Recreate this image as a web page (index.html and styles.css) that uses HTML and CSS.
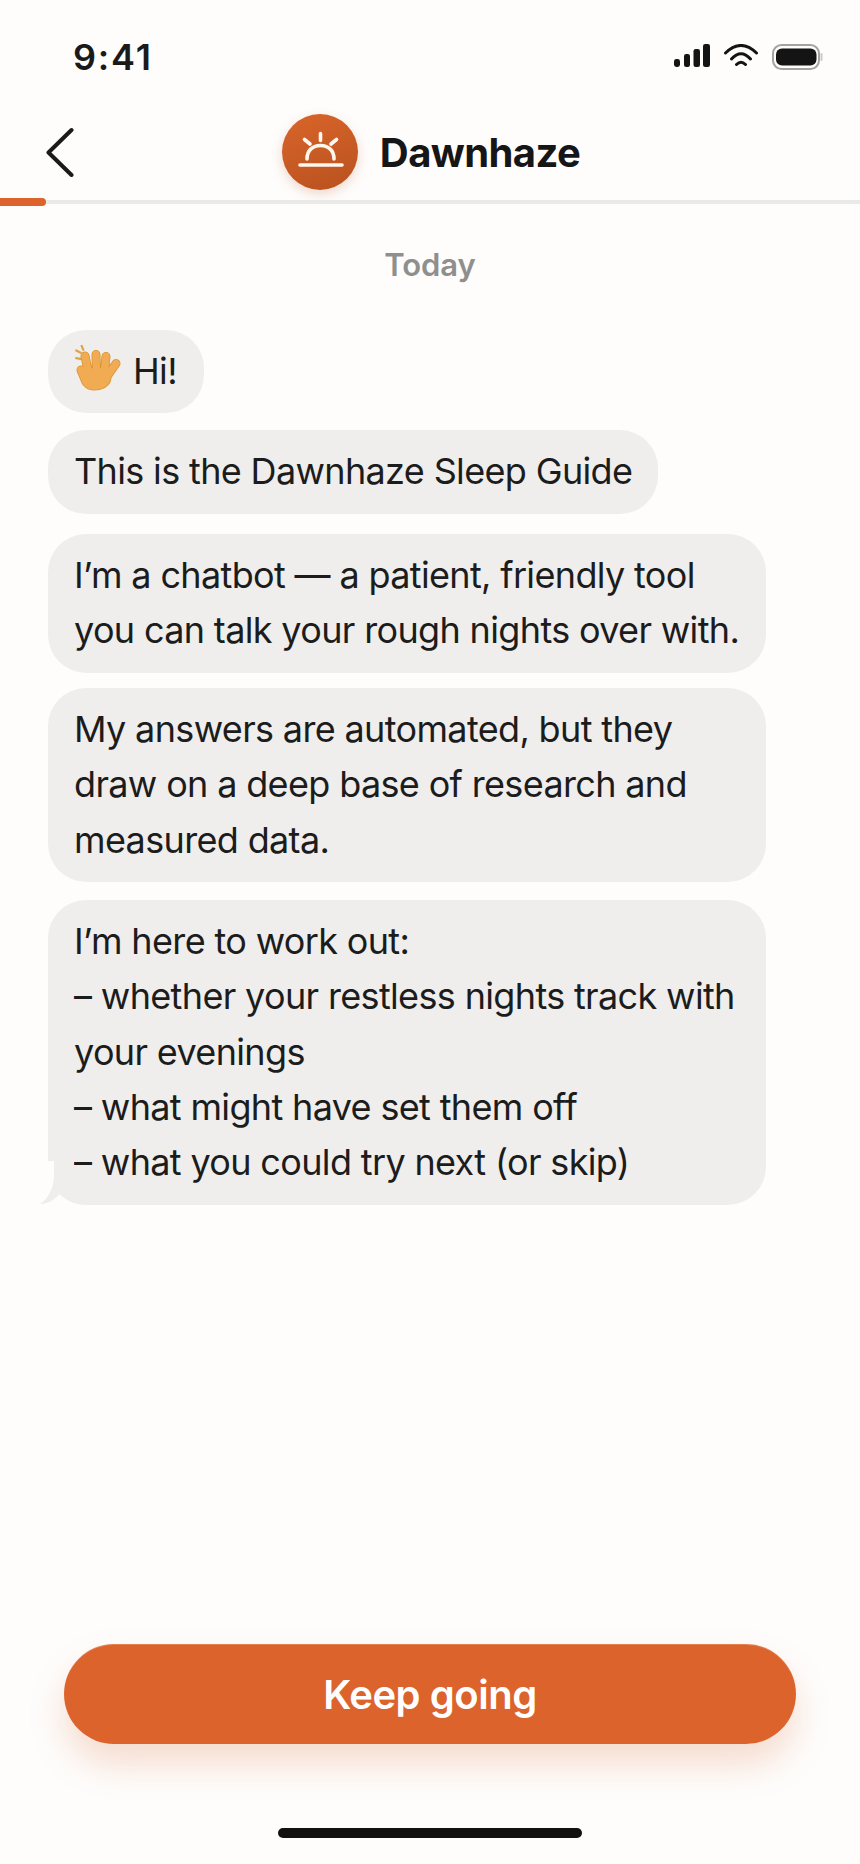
FILE: index.html
```html
<!DOCTYPE html>
<html lang="en">
<head>
<meta charset="utf-8">
<title>Dawnhaze</title>
<link rel="stylesheet" href="styles.css">
</head>
<body>
<div class="phone">
  <div class="status">
    <span class="time">9:41</span>
    <div class="status-icons">
      <svg class="ic-signal" width="36" height="24" viewBox="0 0 36 24"><rect x="0" y="15" width="6" height="8" rx="2.4"/><rect x="10" y="10" width="6" height="13" rx="2.2"/><rect x="19.5" y="5" width="6.5" height="18" rx="2.2"/><rect x="29" y="0" width="7" height="23" rx="2.2"/></svg>
      <svg class="ic-wifi" width="34" height="24" viewBox="0 0 34 24"><path d="M1.5 9Q17 -6 32.500 9M7.500 15Q17 4.500 26.500 15M12.500 20.500Q17 16 21.500 20.500"/></svg>
      <svg class="ic-battery" width="52" height="26" viewBox="0 0 52 26"><rect class="bat-o" x="1" y="1" width="46" height="24" rx="8.500"/><rect class="bat-i" x="4" y="4.500" width="40.500" height="17" rx="6"/><rect class="bat-c" x="48.500" y="9" width="2" height="8" rx="1"/></svg>
    </div>
  </div>
  <header class="bar">
    <div class="back">
      <svg width="28" height="50" viewBox="0 0 28 50"><path d="M25.500 3 2.500 25.500 25.500 48"/></svg>
    </div>
    <div class="brand">
      <div class="logo">
        <svg width="76" height="76" viewBox="0 0 76 76"><path d="M18 51H60M25 45C25 36 31 31.500 38.500 31.500S52 36 52 45M38.500 19.500V26.500M22.500 25.500 28 30M54.500 25.500 49 30"/></svg>
      </div>
      <span class="title">Dawnhaze</span>
    </div>
    <div></div>
  </header>
  <div class="track"><div class="fill"></div></div>
  <div class="today">Today</div>
  <main class="chat">
    <div class="bubble hi">
      <svg class="wave" width="48" height="50" viewBox="0 0 48 50">
        <path class="sparks" d="M6.700 0.800 8.300 4.800M1.200 5.500 5.700 7.800M1.200 13.200 6.700 14.200"/>
        <path class="hand-o" d="M10 11 14 30M21 9.500 21.500 30M31 11.500 29 30M41 18.500 33 30M6 25 11 37M13 27H32V33C31 39 25 41 19 41C14 41 11 38 10 34Z"/>
        <path class="hand-f" d="M10 11 14 30M21 9.500 21.500 30M31 11.500 29 30M41 18.500 33 30M6 25 11 37M13 27H32V33C31 39 25 41 19 41C14 41 11 38 10 34Z"/>
      </svg>
      <span>Hi!</span>
    </div>
    <div class="bubble g2 short">This is the Dawnhaze Sleep Guide</div>
    <div class="bubble wide g3">I’m a chatbot — a patient, friendly tool<br>you can talk your rough nights over with.</div>
    <div class="bubble wide g4">My answers are automated, but they<br>draw on a deep base of research and<br>measured data.</div>
    <div class="bubble wide g5 last">I’m here to work out:<br>– whether your restless nights track with<br>your evenings<br>– what might have set them off<br>– what you could try next (or skip)
      <svg class="tail" width="48" height="44" viewBox="0 0 48 44"><rect class="tail-bg" x="0" y="0" width="14" height="44"/><path class="tail-f" d="M14 0V14C14 26 9 37 0 43C8 43 15 39 20 32C26 39 34 44 47 44L34 24V0Z"/></svg>
    </div>
  </main>
  <button class="cta">Keep going</button>
  <div class="home"></div>
</div>
</body>
</html>
```
FILE: styles.css
```css
* { box-sizing: border-box; }
html, body { margin: 0; padding: 0; }
body { background: #fefdfc; font-family: Inter, "Liberation Sans", sans-serif; color: #1a1a1a; }
.phone { width: 860px; height: 1864px; display: flex; flex-direction: column; overflow: hidden; background: #fefdfc; }

.status { height: 114px; padding: 36px 36px 0 73px; display: flex; justify-content: space-between; align-items: flex-start; }
.time { font-size: 36px; line-height: 42px; font-weight: 600; letter-spacing: 1.8px; }
.status-icons { display: flex; align-items: flex-start; gap: 14px; padding-top: 8px; }
.ic-signal { fill: #141414; }
.ic-wifi path { fill: none; stroke: #141414; stroke-width: 3; stroke-linecap: round; }
.bat-o { fill: none; stroke: #a3a3a3; stroke-width: 2; }
.bat-i { fill: #141414; }
.bat-c { fill: #c9c9c9; }

.bar { height: 76px; display: grid; grid-template-columns: 1fr auto 1fr; align-items: center; }
.back { padding: 0 0 0 46px; display: flex; }
.back path { fill: none; stroke: #1a1a1a; stroke-width: 4; stroke-linecap: round; stroke-linejoin: round; }
.brand { display: flex; align-items: center; gap: 22px; padding-left: 2px; }
.logo { width: 76px; height: 76px; border-radius: 50%; background: linear-gradient(160deg, #d9652a, #b8511f); box-shadow: 0 4px 12px rgba(184, 81, 31, .22); }
.logo svg { display: block; }
.logo path { fill: none; stroke: #fff6ee; stroke-width: 3.6; stroke-linecap: round; }
.title { padding-top: 2px; font-size: 40px; line-height: 46px; font-weight: 700; color: #161616; letter-spacing: -.6px; }

.track { position: relative; height: 4px; margin-top: 10px; background: #e9e9e7; }
.fill { position: absolute; left: 0; top: -2px; width: 46px; height: 8px; border-radius: 0 4px 4px 0; background: #dc642c; }

.today { margin-top: 43px; text-align: center; font-size: 31px; line-height: 36px; font-weight: 600; color: #8f8f8d; letter-spacing: -.1px; }

.chat { margin-top: 47px; padding: 0 48px; display: flex; flex-direction: column; align-items: flex-start; }
.bubble { position: relative; max-width: 718px; padding: 14px 27px 14px 26px; border-radius: 38px; background: #efeeed; font-size: 36px; line-height: 55.3px; letter-spacing: -.65px; color: #1c1c1c; white-space: nowrap; }
.wide { width: 718px; }
.short { padding-right: 26px; }
.hi { display: flex; align-items: center; gap: 10px; padding-left: 27px; }
.wave { display: block; margin-top: -4px; }
.sparks { fill: none; stroke: #e3a246; stroke-width: 2.2; stroke-linecap: round; }
.hand-o, .hand-f { stroke-linecap: round; stroke-linejoin: round; }
.hand-o { fill: #d99433; stroke: #d99433; stroke-width: 9; }
.hand-f { fill: #f0ab53; stroke: #f0ab53; stroke-width: 7.4; }
.g2 { margin-top: 17px; }
.g3 { margin-top: 20.5px; }
.g4 { margin-top: 15.5px; }
.g5 { margin-top: 18px; }
.tail { position: absolute; left: -8px; bottom: 0; display: block; }
.tail-bg { fill: #fefdfc; }
.tail-f { fill: #efeeed; }

.cta { margin: auto 64px 0; height: 100px; flex: none; border: 0; border-radius: 50px; background: #dc642c; color: #fff; font-family: inherit; font-size: 40px; font-weight: 600; letter-spacing: -.45px; box-shadow: 0 20px 36px rgba(216, 100, 44, .22), inset 0 1px 0 rgba(255, 255, 255, .18); }
.home { flex: none; align-self: center; width: 304px; height: 10px; margin: 84px 0 26px; border-radius: 5px; background: #111; }
```
